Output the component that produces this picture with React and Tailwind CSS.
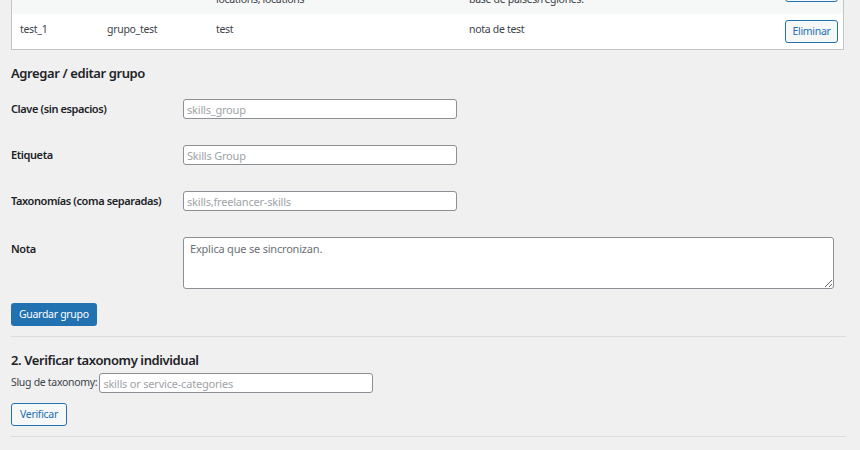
import React from "react";

const font = "font-['Noto_Sans','Open_Sans',sans-serif]";

const btnOutline =
  "h-[23px] rounded-[3px] border border-[#2271b1] bg-[#f6f7f7] text-[#2271b1] text-[10.5px] tracking-[-0.3px] leading-none";

const inputCls =
  "h-[20px] rounded-[3px] border border-[#8c8f94] bg-white px-[3px] text-[11px] tracking-[-0.2px] placeholder:text-[#a0a3a7] outline-none";

function Cell({ children }) {
  return <div className="px-2 py-[6px] leading-[18px] text-[10.5px] tracking-[-0.3px]">{children}</div>;
}

function Field({ label, placeholder }) {
  return (
    <div className="flex items-center h-[46px]">
      <div className="w-[172px] font-semibold text-[#1d2327] text-[11px] tracking-[-0.4px]">{label}</div>
      <input className={`w-[274px] ${inputCls}`} placeholder={placeholder} />
    </div>
  );
}

export default function App() {
  return (
    <div className={`w-[860px] h-[450px] overflow-hidden bg-[#f0f0f1] text-[11px] text-[#3c434a] ${font}`}>
      <div className="pl-[11px] pr-[16px]">
        <div className="w-[833px] -mt-[35px] border border-[#c3c4c7] bg-white">
          <div className="grid grid-cols-[87px_109px_253px_316px_1fr] bg-[#f6f7f7]">
            <Cell>test_0</Cell>
            <Cell>grupo_loc</Cell>
            <Cell>
              countries,
              <br />
              locations, locations
            </Cell>
            <Cell>
              Agrupa la
              <br />
              base de países/regiones.
            </Cell>
            <div className="pl-2 pr-[5px] pt-[13px] pb-[6px]">
              <button className={`w-[53px] ${btnOutline}`}>Eliminar</button>
            </div>
          </div>
          <div className="grid grid-cols-[87px_109px_253px_316px_1fr] bg-white">
            <Cell>test_1</Cell>
            <Cell>grupo_test</Cell>
            <Cell>test</Cell>
            <Cell>nota de test</Cell>
            <div className="pl-2 pr-[5px] pt-[6px] pb-[6px]">
              <button className={`w-[53px] ${btnOutline}`}>Eliminar</button>
            </div>
          </div>
        </div>

        <h2 className="mt-[13px] text-[13px] tracking-[-0.4px] leading-[20px] font-semibold text-[#1d2327]">
          Agregar / editar grupo
        </h2>

        <div className="mt-[3px]">
          <Field label="Clave (sin espacios)" placeholder="skills_group" />
          <Field label="Etiqueta" placeholder="Skills Group" />
          <Field label="Taxonomías (coma separadas)" placeholder="skills,freelancer-skills" />
          <div className="flex items-start pt-[13px]">
            <div className="w-[172px] pt-[3px] font-semibold text-[#1d2327] leading-[18px] text-[11px] tracking-[-0.4px]">
              Nota
            </div>
            <textarea
              className="w-[651px] h-[52px] rounded-[3px] border border-[#8c8f94] bg-white px-[6px] py-[3px] text-[11px] tracking-[-0.2px] placeholder:text-[#6c7075] outline-none"
              placeholder="Explica que se sincronizan."
            />
          </div>
        </div>

        <button className="mt-[14px] h-[23px] px-[8px] rounded-[3px] bg-[#2271b1] text-white text-[10.5px] tracking-[-0.3px] leading-none">
          Guardar grupo
        </button>

        <div className="mt-[10px] h-px w-[835px] bg-[#dcdcde]" />

        <h2 className="mt-[13px] text-[13px] tracking-[-0.4px] leading-[20px] font-semibold text-[#1d2327]">
          2. Verificar taxonomy individual
        </h2>

        <div className="mt-[3px] flex items-center gap-[2px]">
          <span className="text-[10.5px] tracking-[-0.3px]">Slug de taxonomy:</span>
          <input className={`w-[274px] ${inputCls}`} placeholder="skills or service-categories" />
        </div>

        <button className={`mt-[10px] px-[8px] ${btnOutline}`}>Verificar</button>

        <div className="mt-[10px] h-px w-[835px] bg-[#dcdcde]" />
      </div>
    </div>
  );
}
